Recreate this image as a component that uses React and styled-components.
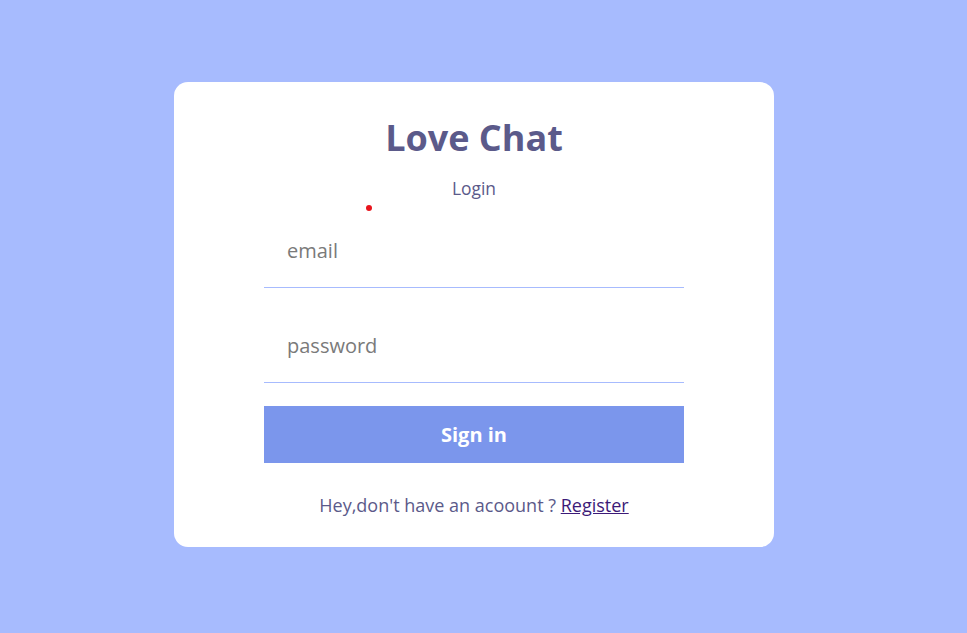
import React from "react";
import styled, { createGlobalStyle } from "styled-components";

//! Styled Components

const GlobalStyle = createGlobalStyle`
  * {
    box-sizing: border-box;
  }
  body {
    margin: 0;
    font-family: "Open Sans", "Liberation Sans", sans-serif;
    background-color: #a7bbfe;
  }
`;

const Page = styled.div`
  width: 100%;
  height: 100vh;
  display: flex;
  align-items: center;
  justify-content: center;
  padding-right: 19px;
  padding-bottom: 4px;
`;

const Card = styled.div`
  position: relative;
  width: 600px;
  height: 465px;
  background-color: #ffffff;
  border-radius: 14px;
  display: flex;
  flex-direction: column;
  align-items: center;
  padding-top: 31px;
`;

const Title = styled.h1`
  margin: 0;
  font-size: 36px;
  font-weight: 700;
  line-height: 50px;
  color: #5b5a8a;
`;

const SubTitle = styled.div`
  margin-top: 13px;
  font-size: 17.4px;
  line-height: 24px;
  color: #5b5a8a;
`;

const Dot = styled.span`
  position: absolute;
  left: 192px;
  top: 123px;
  width: 6px;
  height: 6px;
  border-radius: 50%;
  background-color: #e8141c;
`;

const Form = styled.form`
  width: 420px;
  margin-top: 13px;
  display: flex;
  flex-direction: column;
`;

const Input = styled.input`
  width: 100%;
  height: 75px;
  padding: 0 23px;
  border: none;
  border-bottom: 1px solid #a7bbfe;
  outline: none;
  font-family: inherit;
  font-size: 20px;
  color: #555;
  & + & {
    margin-top: 20px;
  }
  &::placeholder {
    color: #7a7a7a;
  }
`;

const Button = styled.button`
  margin-top: 23px;
  height: 57px;
  border: none;
  background-color: #7b96ec;
  color: #ffffff;
  font-family: inherit;
  font-size: 20px;
  font-weight: 700;
  cursor: pointer;
`;

const Footer = styled.p`
  margin: 30px 0 0;
  font-size: 18px;
  color: #5b5a8a;
  a {
    color: #3c1a78;
    text-decoration: underline;
  }
`;

export default function App() {
  return (
    <>
      <GlobalStyle />
      <Page>
        <Card>
          <Title>Love Chat</Title>
          <SubTitle>Login</SubTitle>
          <Dot />
          <Form onSubmit={(e) => e.preventDefault()}>
            <Input type="email" placeholder="email" />
            <Input type="password" placeholder="password" />
            <Button type="submit">Sign in</Button>
          </Form>
          <Footer>
            Hey,don't have an acoount ? <a href="#register">Register</a>
          </Footer>
        </Card>
      </Page>
    </>
  );
}
